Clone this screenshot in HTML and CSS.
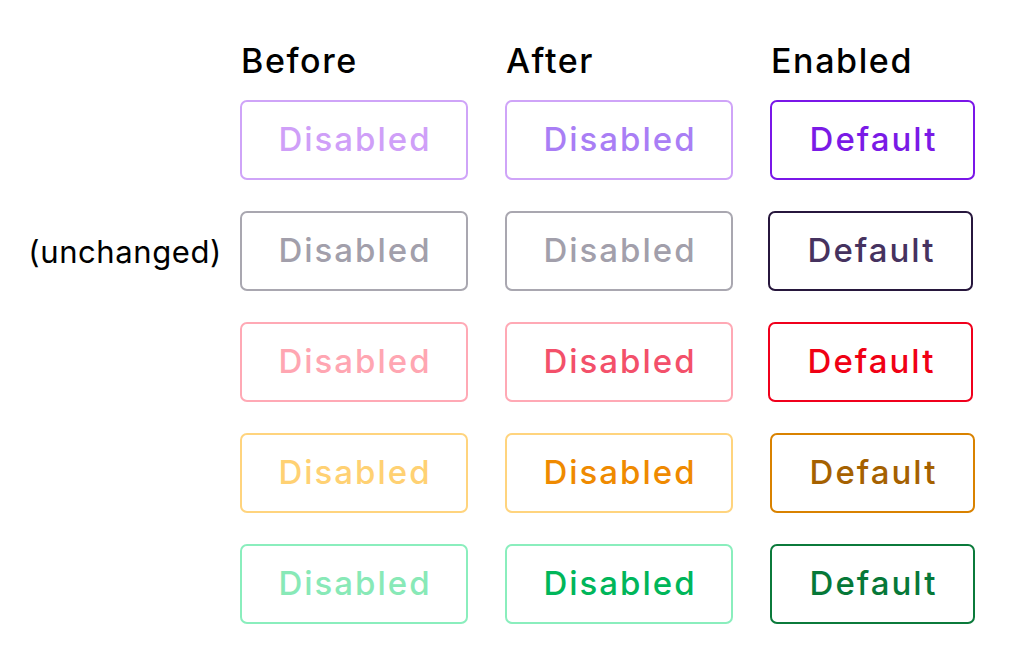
FILE: index.html
```html
<!DOCTYPE html>
<html lang="en">
<head>
<meta charset="utf-8">
<title>Button states</title>
<link rel="stylesheet" href="styles.css">
</head>
<body>
<main class="board">
  <div class="row head">
    <div class="label"></div>
    <div class="col-title">Before</div>
    <div class="col-title">After</div>
    <div class="col-title">Enabled</div>
  </div>
  <div class="row">
    <div class="label"></div>
    <div class="btn purple-before">Disabled</div>
    <div class="btn purple-after">Disabled</div>
    <div class="btn enabled purple-enabled">Default</div>
  </div>
  <div class="row">
    <div class="label">(unchanged)</div>
    <div class="btn gray-before">Disabled</div>
    <div class="btn gray-after">Disabled</div>
    <div class="btn enabled gray-enabled shift">Default</div>
  </div>
  <div class="row">
    <div class="label"></div>
    <div class="btn red-before">Disabled</div>
    <div class="btn red-after">Disabled</div>
    <div class="btn enabled red-enabled shift">Default</div>
  </div>
  <div class="row">
    <div class="label"></div>
    <div class="btn yellow-before">Disabled</div>
    <div class="btn yellow-after">Disabled</div>
    <div class="btn enabled yellow-enabled">Default</div>
  </div>
  <div class="row">
    <div class="label"></div>
    <div class="btn green-before">Disabled</div>
    <div class="btn green-after">Disabled</div>
    <div class="btn enabled green-enabled">Default</div>
  </div>
</main>
</body>
</html>
```

FILE: styles.css
```css
html, body {
  margin: 0;
  padding: 0;
  background: #ffffff;
}
body {
  font-family: "Inter", "Open Sans", sans-serif;
  color: #000;
}
.board {
  padding-top: 40px;
  display: flex;
  flex-direction: column;
  gap: 31px;
}
.row {
  display: flex;
  align-items: center;
  gap: 37px;
}
.row.head {
  height: 40px;
  margin-bottom: -11px;
}
.label {
  box-sizing: border-box;
  width: 222px;
  margin-right: -19px;
  text-align: right;
  font-size: 31px;
  font-weight: 400;
  letter-spacing: 0.6px;
}
.col-title {
  box-sizing: border-box;
  width: 228px;
  font-size: 34px;
  font-weight: 500;
  padding-left: 1px;
  letter-spacing: 1.6px;
}
.col-title:last-child { width: 205px; }
.btn {
  box-sizing: border-box;
  width: 228px;
  height: 80px;
  border: 2px solid;
  border-radius: 7px;
  display: flex;
  align-items: center;
  justify-content: center;
  font-size: 33px;
  font-weight: 500;
  letter-spacing: 2px;
  padding-left: 2px;
  padding-bottom: 2px;
}
.btn.enabled { width: 205px; }
.btn.shift { margin-left: -2px; }

.purple-before { border-color: #cfa4f8; color: #cf9ff8; }
.purple-after { border-color: #cfa4f8; color: #a97ef5; }
.purple-enabled { border-color: #7a16e8; color: #7a1ae6; }

.gray-before { border-color: #a9a7b0; color: #a29fab; }
.gray-after { border-color: #a9a7b0; color: #a29fab; }
.gray-enabled { border-color: #27173d; color: #46325f; }

.red-before { border-color: #ffa9b5; color: #ffa6b2; }
.red-after { border-color: #ffa9b5; color: #f3506a; }
.red-enabled { border-color: #f0001c; color: #f00014; }

.yellow-before { border-color: #ffd47e; color: #ffd173; }
.yellow-after { border-color: #ffd47e; color: #ef8a00; }
.yellow-enabled { border-color: #d98200; color: #a56100; }

.green-before { border-color: #8aeebd; color: #88e9b7; }
.green-after { border-color: #8aeebd; color: #00b65a; }
.green-enabled { border-color: #0b7a3b; color: #067838; }
```
